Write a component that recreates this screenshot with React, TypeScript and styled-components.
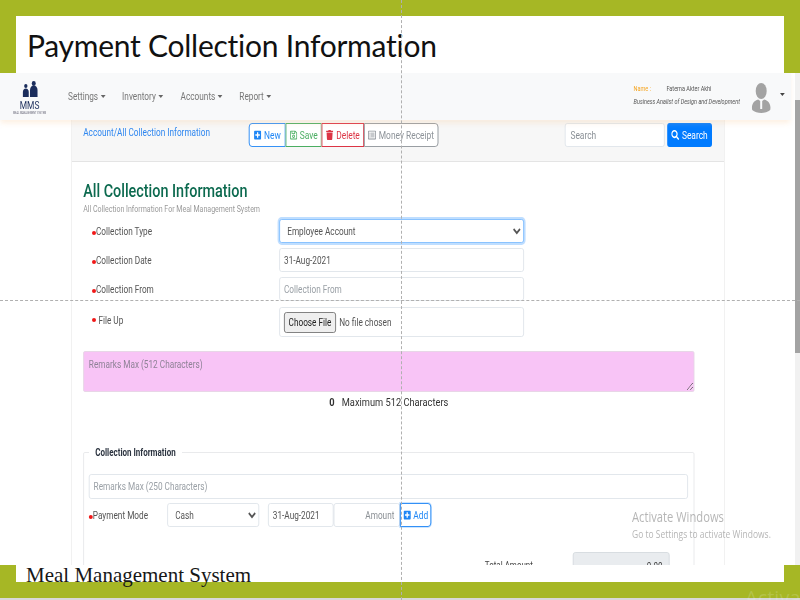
import React from "react";
import styled, { createGlobalStyle } from "styled-components";
import { FaPlusSquare, FaRegSave, FaTrash, FaRegListAlt, FaSearch } from "react-icons/fa";

const Global = createGlobalStyle`
  html, body { margin: 0; padding: 0; background: #fff; }
  * { box-sizing: border-box; }
`;

const Slide = styled.div`
  position: relative;
  width: 800px;
  height: 600px;
  overflow: hidden;
  display: flex;
  flex-direction: column;
  background: #a6b725;
  font-family: Roboto, "Liberation Sans", sans-serif;
`;

const TitleBand = styled.div`
  flex: none;
  height: 73px;
  padding: 16px 16px 0;
`;

const TitlePanel = styled.div`
  height: 57px;
  background: #fff;
  padding: 11px 0 0 11px;
`;

const SlideTitle = styled.h1`
  margin: 0;
  font: 400 30px/37px Lato, "Open Sans", sans-serif;
  color: #111;
  letter-spacing: -0.25px;
`;

const Capture = styled.div`
  flex: none;
  position: relative;
  height: 492px;
  background: #fff;
  overflow: hidden;
  filter: blur(0.35px);
`;

/* the pasted screenshot is a 1000px wide page squeezed into the slide */
const SqueezedPage = styled.div`
  position: relative;
  width: 1000px;
  transform: scaleX(0.8);
  transform-origin: left top;
`;

const NavBar = styled.nav`
  position: relative;
  z-index: 2;
  width: 989px;
  height: 47px;
  display: flex;
  align-items: center;
  background: #f8f9fa;
  box-shadow: 0 3px 6px rgba(250, 205, 160, 0.3);
  padding: 0 8px 0 16px;
`;

const Logo = styled.div`
  width: 42px;
  display: flex;
  flex-direction: column;
  align-items: center;
  color: #1b2d5c;
  margin-right: 27px;
  padding-top: 2px;
`;

const LogoName = styled.span`
  font-size: 10.5px;
  line-height: 11px;
  margin-top: 1px;
`;

const LogoSub = styled.span`
  font-size: 3px;
  line-height: 4px;
  white-space: nowrap;
  color: #667;
`;

const MenuItem = styled.a<{ $gap: number }>`
  display: flex;
  align-items: center;
  margin-right: ${(p) => p.$gap}px;
  font-size: 10.3px;
  color: #777;
  &::after {
    content: "";
    margin-left: 3px;
    border-top: 3px solid #666;
    border-left: 3px solid transparent;
    border-right: 3px solid transparent;
  }
`;

const UserBox = styled.div`
  margin-left: auto;
  display: flex;
  align-items: center;
`;

const UserText = styled.div`
  width: 147px;
  font-size: 6.9px;
  line-height: 13px;
  color: #555;
  margin-bottom: 1px;
`;

const UserLine = styled.div`
  display: flex;
`;

const NameKey = styled.span`
  width: 41px;
  color: #f5a623;
`;

const UserRole = styled.span`
  font-style: italic;
  white-space: nowrap;
`;

const Avatar = styled.svg`
  width: 25px;
  height: 30px;
  margin-right: 11px;
  margin-top: 3px;
`;

const UserCaret = styled.span`
  margin-top: -5px;
  border-top: 3px solid #444;
  border-left: 3px solid transparent;
  border-right: 3px solid transparent;
`;

const Card = styled.section`
  width: 817px;
  margin-left: 89px;
  border: 1px solid #eeeeee;
  border-top: 0;
`;

const CardHeader = styled.header`
  height: 42px;
  background: #f7f7f7;
  border-bottom: 1px solid #e4e4e4;
  display: flex;
  align-items: flex-start;
  padding: 3px 15px 0 14px;
`;

const Crumb = styled.a`
  width: 207px;
  padding-top: 3px;
  font-size: 10.3px;
  color: #2f87f0;
`;

const ButtonGroup = styled.div`
  display: flex;
  height: 24px;
`;

const OutlineButton = styled.button<{ $tone: string; $width: number }>`
  width: ${(p) => p.$width}px;
  height: 24px;
  padding: 0;
  display: flex;
  align-items: center;
  justify-content: center;
  gap: 3px;
  background: #fff;
  border: 1px solid ${(p) => p.$tone};
  color: ${(p) => p.$tone};
  font: 400 10.5px Roboto, sans-serif;
  white-space: nowrap;
  &:first-child { border-radius: 4px 0 0 4px; }
  &:last-child { border-radius: 0 4px 4px 0; }
  svg { font-size: 10px; flex: none; }
`;

const SearchInput = styled.input`
  width: 125px;
  height: 24px;
  margin-left: auto;
  padding: 0 6px;
  border: 1px solid #dfe4ea;
  border-radius: 3px;
  font: 400 10.5px Roboto, sans-serif;
  &::placeholder { color: #8a9096; }
`;

const SearchButton = styled.button`
  width: 56px;
  height: 24px;
  margin-left: 3px;
  padding: 0;
  border: 0;
  border-radius: 3px;
  background: #007bff;
  color: #fff;
  display: flex;
  align-items: center;
  justify-content: center;
  gap: 3px;
  font: 400 10.5px Roboto, sans-serif;
  svg { font-size: 10px; }
`;

const CardBody = styled.div`
  padding: 19px 36px 0 14px;
`;

const Heading = styled.h2`
  margin: 0;
  font: 500 18px/20px Roboto, sans-serif;
  color: #0c6a4f;
`;

const SubHeading = styled.p`
  margin: 3px 0 0;
  font-size: 8.8px;
  line-height: 10px;
  color: #9a9a9a;
`;

const FormRow = styled.div<{ $height: number; $top?: number }>`
  display: flex;
  height: ${(p) => p.$height}px;
  margin-top: ${(p) => p.$top ?? 5}px;
`;

const Label = styled.label<{ $width?: number; $indent?: number }>`
  width: ${(p) => p.$width ?? 245}px;
  flex: none;
  padding-left: ${(p) => p.$indent ?? 11}px;
  padding-top: 1px;
  display: flex;
  align-items: center;
  font-size: 10.3px;
  color: #555;
  &::before {
    content: "";
    width: 5px;
    height: 4px;
    margin-top: 2px;
    border-radius: 50%;
    background: #f01818;
  }
`;

const FileLabel = styled(Label)`
  align-items: flex-start;
  padding-top: 7px;
  &::before { margin: 4px 3px 0 0; }
`;

const controlCss = `
  height: 100%;
  background: #fff;
  border: 1px solid #dfe4ea;
  border-radius: 3px;
  font: 400 10.3px Roboto, sans-serif;
  color: #555;
  outline: none;
  &::placeholder { color: #9aa0a6; }
`;

const Control = styled.input<{ $width?: number; $left?: number }>`
  ${controlCss}
  width: ${(p) => p.$width ?? 306}px;
  margin-left: ${(p) => p.$left ?? 0}px;
  padding: 0 5px;
`;

const AmountInput = styled(Control)`
  text-align: right;
  padding-right: 6px;
  &::placeholder { color: #8a8f94; }
`;

const SelectBox = styled.select<{ $width: number; $focus?: boolean }>`
  ${controlCss}
  width: ${(p) => p.$width}px;
  padding: 0 5px;
  ${(p) => p.$focus && "border-color: #80bdff; box-shadow: 0 0 0 2px rgba(0,123,255,.25);"}
`;

const FileBox = styled.div`
  width: 306px;
  height: 100%;
  border: 1px solid #dfe4ea;
  border-radius: 3px;
  padding: 3px 5px;
  display: flex;
  align-items: center;
  gap: 4px;
  font-size: 10.3px;
  color: #555;
`;

const ChooseButton = styled.button`
  width: 65px;
  height: 21px;
  padding: 0;
  background: #efefef;
  border: 1px solid #767676;
  border-radius: 3px;
  font: 400 10.3px Roboto, sans-serif;
  color: #222;
`;

const Remarks = styled.textarea`
  display: block;
  width: 764px;
  height: 41px;
  margin-top: 14px;
  padding: 6px 6px;
  background: #f8c4f6;
  border: 1px solid #e5d5e5;
  border-radius: 2px;
  font: 400 10.3px Roboto, sans-serif;
  outline: none;
  &::placeholder { color: #8e8296; }
`;

const Counter = styled.div`
  width: 764px;
  margin-top: 4px;
  display: flex;
  justify-content: center;
  gap: 9px;
  font-size: 11.6px;
  line-height: 13px;
  color: #333;
  b { font-weight: 700; }
`;

const Group = styled.fieldset`
  width: 764px;
  height: 130px;
  margin: 38px 0 0;
  padding: 16px 6px 0;
  border: 1px solid #e6e8ea;
  border-radius: 2px;
`;

const Legend = styled.legend`
  margin-left: 0;
  padding: 0 8px;
  font-size: 10px;
  line-height: 11px;
  font-weight: 700;
  color: #2c3440;
`;

const WideInput = styled(Control)`
  display: block;
  width: 749px;
  height: 25px;
`;

const PayRow = styled.div`
  display: flex;
  height: 24px;
  margin-top: 4px;
`;

const AddButton = styled(OutlineButton)`
  border-radius: 4px;
  box-shadow: 0 0 0 1px rgba(0, 123, 255, 0.2);
`;

const TotalRow = styled.div`
  display: flex;
  margin-top: 25px;
  padding-left: 495px;
  font-size: 10px;
  color: #444;
`;

const TotalLabel = styled.span`
  width: 110px;
  padding-top: 8px;
`;

const TotalBox = styled.div`
  width: 121px;
  height: 24px;
  padding: 8px 8px 0 0;
  text-align: right;
  background: #e9ecef;
  border: 1px solid #d5dadf;
  border-radius: 3px;
`;

const Scrollbar = styled.div`
  position: absolute;
  top: 0;
  right: 0;
  bottom: 0;
  width: 5px;
  background: #f1f1f1;
`;

const ScrollThumb = styled.div`
  height: 253px;
  margin-top: 27px;
  background: #a3a3a3;
`;

const Watermark = styled.div`
  position: absolute;
  left: 790px;
  top: 435px;
  color: rgba(120, 120, 120, 0.55);
  font: 400 14px/18px "Open Sans", sans-serif;
  white-space: nowrap;
  small {
    display: block;
    font-size: 10.6px;
    line-height: 16px;
  }
`;

const FooterBand = styled.div`
  flex: none;
  height: 17px;
  padding: 0 16px;
`;

const FooterPanel = styled.div`
  height: 17px;
  background: #fff;
  padding-left: 10px;
`;

const FooterText = styled.span`
  display: block;
  position: relative;
  z-index: 1;
  font: 400 21px/20px "Liberation Serif", serif;
  white-space: nowrap;
  color: #171717;
`;

const BottomEdge = styled.div`
  position: absolute;
  left: 0;
  right: 0;
  bottom: 0;
  height: 2px;
  background: #d8d8d8;
`;

const GhostText = styled.div`
  position: absolute;
  left: 745px;
  top: 586px;
  font: 400 20px/24px "Open Sans", sans-serif;
  color: rgba(255, 255, 255, 0.16);
  white-space: nowrap;
`;

const GuideV = styled.div`
  position: absolute;
  z-index: 5;
  left: 401px;
  top: 0;
  bottom: 0;
  border-left: 1px dashed #b0b0b0;
`;

const GuideH = styled.div`
  position: absolute;
  z-index: 5;
  top: 300px;
  left: 0;
  right: 0;
  border-top: 1px dashed #b0b0b0;
`;

const menu = [
  { name: "Settings", gap: 21 },
  { name: "Inventory", gap: 22 },
  { name: "Accounts", gap: 21 },
  { name: "Report", gap: 0 },
];

export default function App() {
  return (
    <Slide>
      <Global />
      <TitleBand>
        <TitlePanel>
          <SlideTitle>Payment Collection Information</SlideTitle>
        </TitlePanel>
      </TitleBand>

      <Capture>
        <SqueezedPage>
          <NavBar>
            <Logo>
              <svg width="23" height="18" viewBox="0 0 22 18" preserveAspectRatio="none" fill="currentColor">
                <circle cx="6" cy="5" r="2" />
                <path d="M2.500 16V11c0-2 1.500-3.500 3.500-3.500S9.500 9 9.500 11v5z" />
                <circle cx="15.500" cy="2.500" r="2.400" />
                <path d="M11 16V9c0-2.500 2-4.500 4.500-4.500S20 6.500 20 9v7z" />
              </svg>
              <LogoName>MMS</LogoName>
              <LogoSub>MEAL MANAGEMENT SYSTEM</LogoSub>
            </Logo>
            {menu.map((m) => (
              <MenuItem key={m.name} $gap={m.gap}>
                {m.name}
              </MenuItem>
            ))}
            <UserBox>
              <UserText>
                <UserLine>
                  <NameKey>Name :</NameKey>
                  <span>Fatema Akter Akhi</span>
                </UserLine>
                <UserRole>Business Analist of Design and Development</UserRole>
              </UserText>
              <Avatar viewBox="0 0 20 30" preserveAspectRatio="none" fill="#a3a3a3">
                <ellipse cx="10" cy="8" rx="5.500" ry="8" />
                <path d="M1 27c-1-5 1-9 6-10.500l2 1.500v8h2v-8l2-1.500c5 1.500 7 5.500 6 10.500-2 2-6 3-9 3s-7-1-9-3z" />
              </Avatar>
              <UserCaret />
            </UserBox>
          </NavBar>

          <Card>
            <CardHeader>
              <Crumb>Account/All Collection Information</Crumb>
              <ButtonGroup>
                <OutlineButton $tone="#1f86f5" $width={46}>
                  <FaPlusSquare />
                  New
                </OutlineButton>
                <OutlineButton $tone="#4bae62" $width={45}>
                  <FaRegSave />
                  Save
                </OutlineButton>
                <OutlineButton $tone="#dc3545" $width={53}>
                  <FaTrash />
                  Delete
                </OutlineButton>
                <OutlineButton $tone="#8d9399" $width={93}>
                  <FaRegListAlt />
                  Money Receipt
                </OutlineButton>
              </ButtonGroup>
              <SearchInput placeholder="Search" />
              <SearchButton>
                <FaSearch />
                Search
              </SearchButton>
            </CardHeader>

            <CardBody>
              <Heading>All Collection Information</Heading>
              <SubHeading>All Collection Information For Meal Management System</SubHeading>

              <FormRow $height={24} $top={5}>
                <Label>Collection Type</Label>
                <SelectBox $width={306} $focus defaultValue="Employee Account">
                  <option>Employee Account</option>
                </SelectBox>
              </FormRow>
              <FormRow $height={24}>
                <Label>Collection Date</Label>
                <Control defaultValue="31-Aug-2021" />
              </FormRow>
              <FormRow $height={24}>
                <Label>Collection From</Label>
                <Control placeholder="Collection From" />
              </FormRow>
              <FormRow $height={30} $top={6}>
                <FileLabel>File Up</FileLabel>
                <FileBox>
                  <ChooseButton>Choose File</ChooseButton>
                  No file chosen
                </FileBox>
              </FormRow>

              <Remarks placeholder="Remarks Max (512 Characters)" />
              <Counter>
                <b>0</b>
                <span>Maximum 512 Characters</span>
              </Counter>

              <Group>
                <Legend>Collection Information</Legend>
                <WideInput placeholder="Remarks Max (250 Characters)" />
                <PayRow>
                  <Label $width={98} $indent={0}>Payment Mode</Label>
                  <SelectBox $width={115} defaultValue="Cash">
                    <option>Cash</option>
                  </SelectBox>
                  <Control $width={82} $left={11} defaultValue="31-Aug-2021" />
                  <AmountInput $width={83} placeholder="Amount" />
                  <AddButton $tone="#1f86f5" $width={39}>
                    <FaPlusSquare />
                    Add
                  </AddButton>
                </PayRow>
                <TotalRow>
                  <TotalLabel>Total Amount</TotalLabel>
                  <TotalBox>0.00</TotalBox>
                </TotalRow>
              </Group>
            </CardBody>
          </Card>

          <Watermark>
            Activate Windows
            <small>Go to Settings to activate Windows.</small>
          </Watermark>
        </SqueezedPage>

        <Scrollbar>
          <ScrollThumb />
        </Scrollbar>
      </Capture>

      <FooterBand>
        <FooterPanel>
          <FooterText>Meal Management System</FooterText>
        </FooterPanel>
      </FooterBand>

      <BottomEdge />
      <GhostText>Activate</GhostText>
      <GuideV />
      <GuideH />
    </Slide>
  );
}
